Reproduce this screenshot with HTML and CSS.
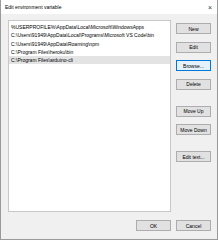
FILE: index.html
```html
<!DOCTYPE html>
<html>
<head>
<meta charset="utf-8">
<link rel="stylesheet" href="styles.css">
</head>
<body>
<div class="dialog">
  <div class="titlebar">
    <span class="title">Edit environment variable</span>
    <span class="close">×</span>
  </div>
  <div class="content">
    <div class="main">
      <div class="list">
        <div class="row">%USERPROFILE%\AppData\Local\Microsoft\WindowsApps</div>
        <div class="row">C:\Users\91949\AppData\Local\Programs\Microsoft VS Code\bin</div>
        <div class="row">C:\Users\91949\AppData\Roaming\npm</div>
        <div class="row">C:\Program Files\heroku\bin</div>
        <div class="row selected">C:\Program Files\arduino-cli</div>
      </div>
      <div class="side">
        <div class="group">
          <button class="btn">New</button>
          <button class="btn">Edit</button>
          <button class="btn focus">Browse...</button>
          <button class="btn">Delete</button>
        </div>
        <div class="group">
          <button class="btn">Move Up</button>
          <button class="btn">Move Down</button>
        </div>
        <div class="group">
          <button class="btn">Edit text...</button>
        </div>
      </div>
    </div>
    <div class="footer">
      <button class="btn">OK</button>
      <button class="btn">Cancel</button>
    </div>
  </div>
</div>
</body>
</html>
```
FILE: styles.css
```css
html, body {
  margin: 0;
  padding: 0;
  width: 218px;
  height: 240px;
  overflow: hidden;
  background: #f0f0f0;
  font-family: "Liberation Sans", Arial, sans-serif;
}
.dialog {
  box-sizing: border-box;
  width: 218px;
  height: 240px;
  border: 1px solid #9a9a9a;
  border-top: none;
  background: #f0f0f0;
  display: flex;
  flex-direction: column;
}
.titlebar {
  height: 14px;
  background: #ffffff;
  display: flex;
  align-items: center;
  justify-content: space-between;
  padding: 0 5px 0 4px;
  font-size: 5px;
  color: #000;
}
.close {
  font-size: 7px;
  color: #333;
}
.content {
  flex: 1;
  display: flex;
  flex-direction: column;
  padding: 6px 6px 0 7px;
}
.main {
  display: flex;
  gap: 5px;
}
.list {
  box-sizing: border-box;
  width: 163px;
  height: 192px;
  background: #fff;
  border: 1px solid #c8c8c8;
  padding-top: 2px;
}
.row {
  height: 8.25px;
  line-height: 8.25px;
  font-size: 5px;
  padding-left: 2px;
  white-space: nowrap;
  overflow: hidden;
  color: #000;
}
.row.selected {
  background: #e3e3e3;
}
.side {
  display: flex;
  flex-direction: column;
  padding-top: 3px;
  gap: 16px;
}
.group {
  display: flex;
  flex-direction: column;
  gap: 7.5px;
}
.btn {
  box-sizing: border-box;
  width: 35px;
  height: 11px;
  margin: 0;
  padding: 0;
  font-family: "Liberation Sans", Arial, sans-serif;
  font-size: 5px;
  color: #000;
  background: #e1e1e1;
  border: 1px solid #adadad;
  border-radius: 0;
}
.btn.focus {
  background: #e5f1fb;
  border: 1px solid #0078d7;
}
.footer {
  display: flex;
  justify-content: flex-end;
  gap: 5px;
  padding-top: 8px;
}
```
